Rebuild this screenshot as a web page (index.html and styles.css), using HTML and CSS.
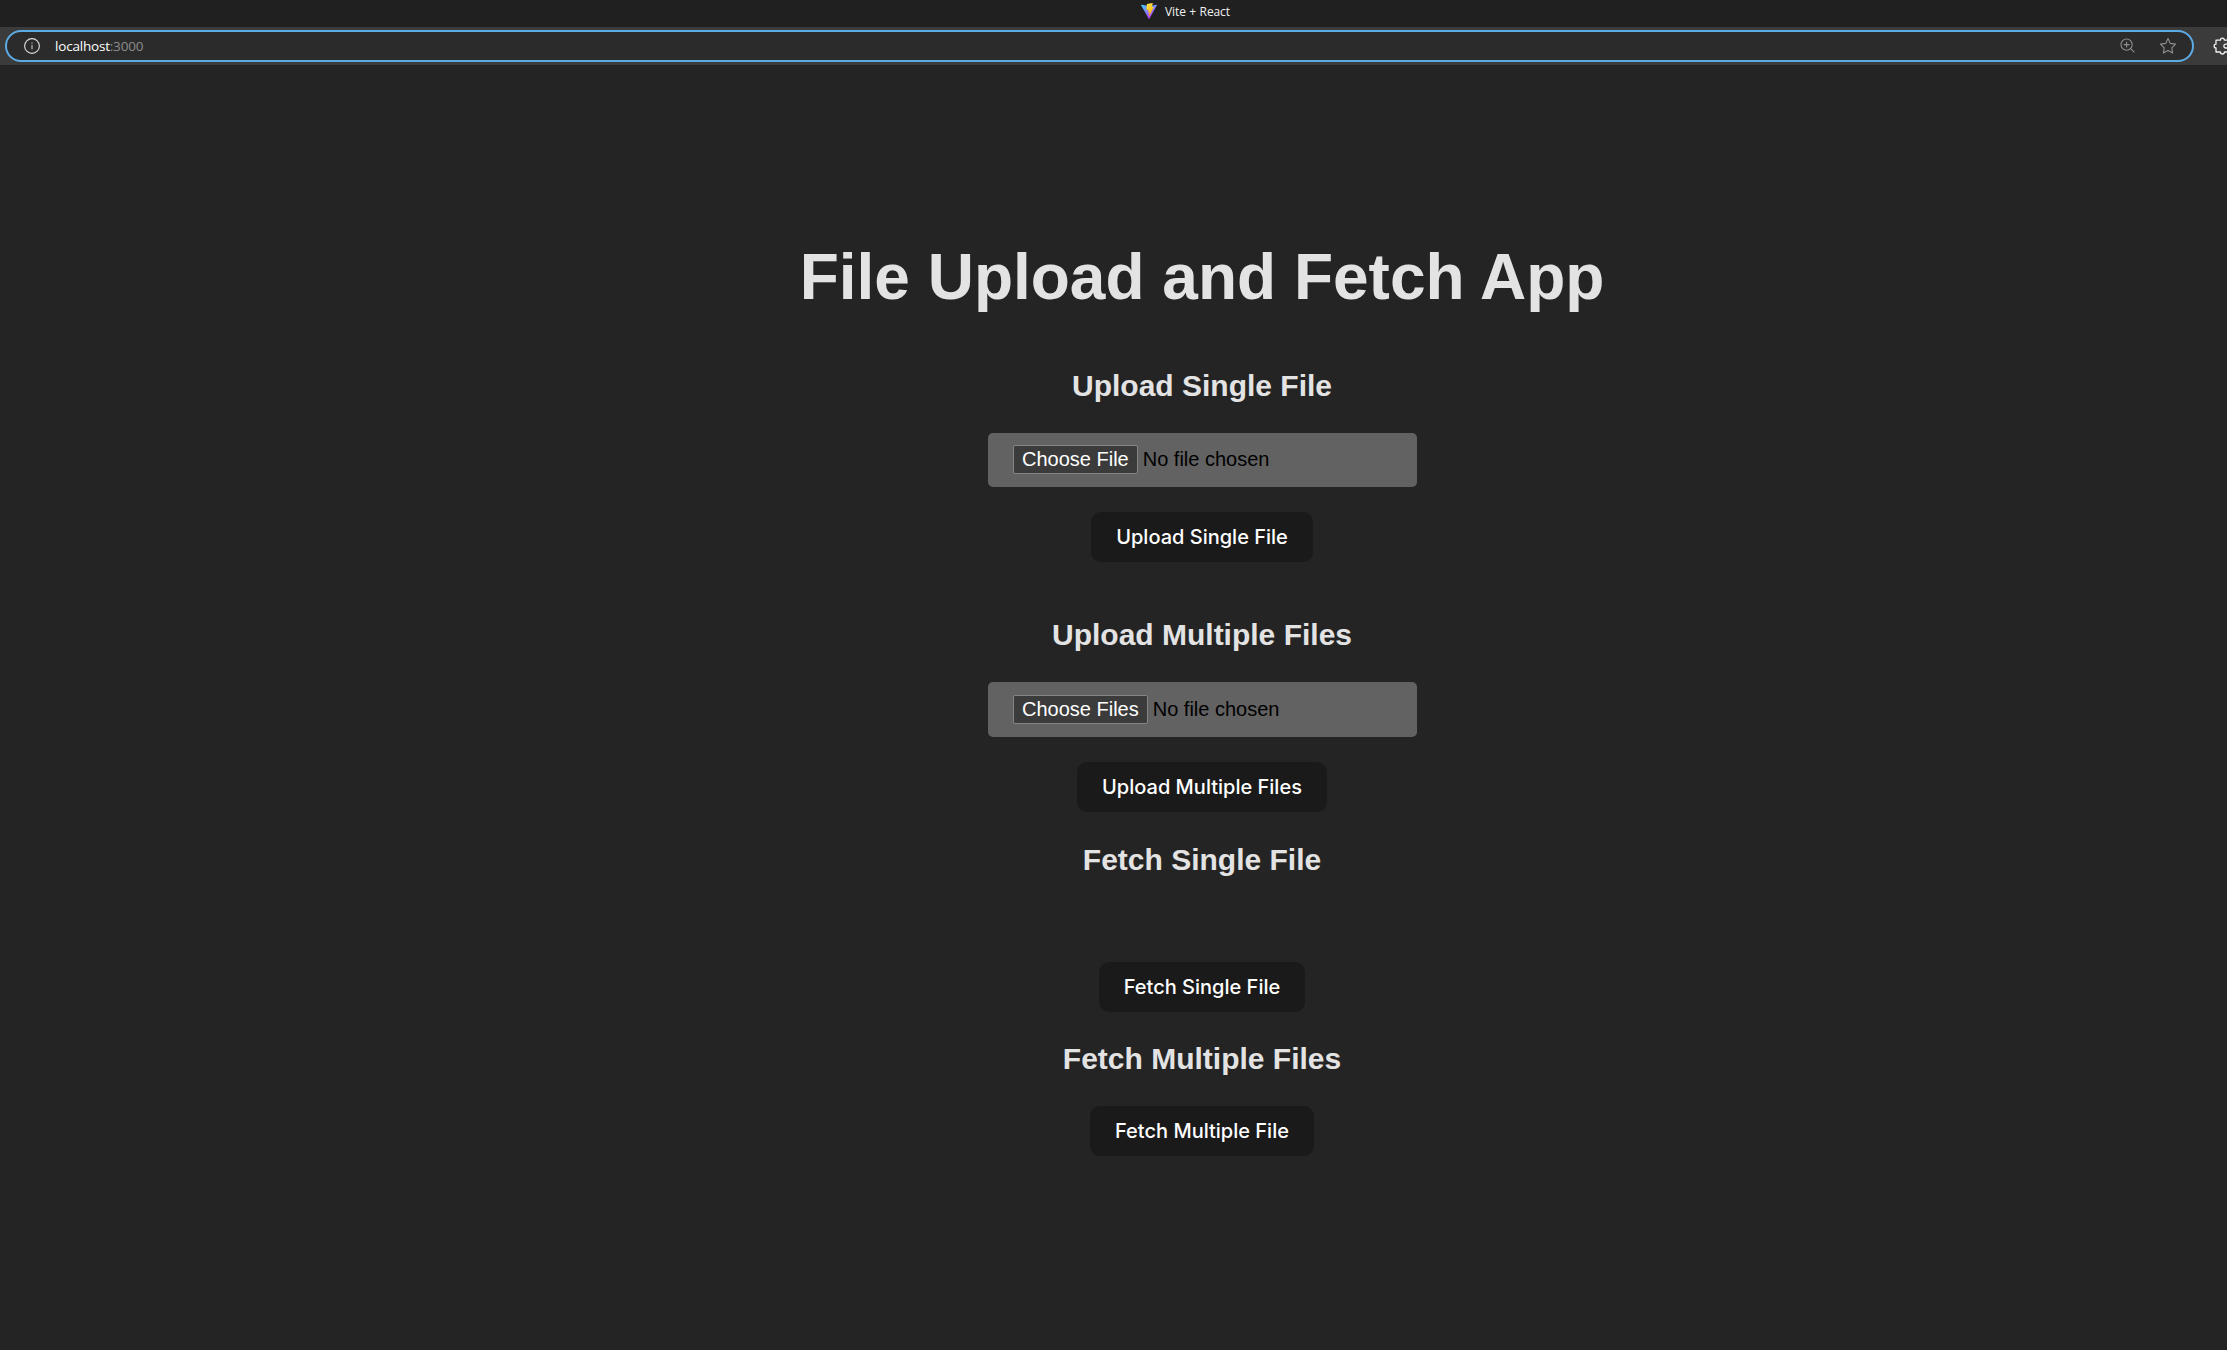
FILE: index.html
```html
<!DOCTYPE html>
<html lang="en">
<head>
<meta charset="utf-8">
<title>Vite + React</title>
<link rel="stylesheet" href="styles.css">
</head>
<body>
<header class="titlebar">
  <svg class="logo" width="16" height="16" viewBox="0 0 256 257">
    <defs>
      <linearGradient id="shield" x1="0" y1="0" x2=".6" y2="1"><stop offset="0" stop-color="#41d1ff"/><stop offset="1" stop-color="#bd34fe"/></linearGradient>
      <linearGradient id="bolt" x1=".4" y1="0" x2=".5" y2="1"><stop offset="0" stop-color="#ffea83"/><stop offset=".1" stop-color="#ffdd35"/><stop offset="1" stop-color="#ffa800"/></linearGradient>
    </defs>
    <path fill="url(#shield)" d="M255.153 37.938L134.897 252.976c-2.483 4.44-8.862 4.466-11.382.048L.875 37.958c-2.746-4.814 1.371-10.646 6.827-9.67l120.385 21.517a6.537 6.537 0 0 0 2.322-.004l117.867-21.483c5.438-.991 9.574 4.796 6.877 9.62Z"/>
    <path fill="url(#bolt)" d="M185.432.063L96.44 17.501a3.268 3.268 0 0 0-2.634 3.014l-5.474 92.456a3.268 3.268 0 0 0 3.997 3.378l24.777-5.718c2.318-.535 4.413 1.507 3.936 3.838l-7.361 36.047c-.495 2.426 1.782 4.5 4.151 3.78l15.304-4.649c2.372-.72 4.652 1.36 4.15 3.788l-11.698 56.621c-.732 3.542 3.979 5.473 5.943 2.437l1.313-2.028l72.516-144.72c1.215-2.423-.88-5.186-3.54-4.672l-25.505 4.922c-2.396.462-4.435-1.77-3.759-4.114l16.646-57.705c.677-2.35-1.37-4.583-3.769-4.113Z"/>
  </svg>
  <span>Vite + React</span>
</header>
<nav class="toolbar">
  <div class="address">
    <svg class="info" width="16" height="16" viewBox="0 0 16 16" fill="none" stroke="#dedede" stroke-width="1.1"><circle cx="8" cy="8" r="7.4"/><path d="M8 7v4.2M8 4.4v1.3" stroke="#a8a8a8" stroke-width="1.4"/></svg>
    <span class="url">localhost<span class="port">:3000</span></span>
    <svg class="magnifier" width="16" height="16" viewBox="0 0 16 16" fill="none" stroke="#8f8f8f" stroke-width="1.1"><circle cx="6.6" cy="6.6" r="5.6"/><path d="M10.2 10.2l4.2 4.2M6.6 3.7v5.8M3.7 6.6h5.8"/></svg>
    <svg class="star" width="18" height="18" viewBox="0 0 18 18" fill="none" stroke="#8f8f8f" stroke-width="1.1" stroke-linejoin="round"><path d="M9 1.6l2.3 4.8 5.3.7-3.8 3.7.9 5.3L9 13.6l-4.7 2.5.9-5.3-3.8-3.7 5.3-.7z"/></svg>
  </div>
  <svg class="puzzle" width="14" height="18" viewBox="0 0 14 18" fill="none" stroke="#f0f0f0" stroke-width="1.3" stroke-linejoin="round"><path d="M14 3.2h-2.6a2 2 0 0 0-4 0H3v4a1.9 1.9 0 0 0 0 3.8v4h4.4a2 2 0 0 0 4 0H14M14 7.2h-1.2a1.9 1.9 0 0 0 0 3.8H14"/></svg>
</nav>
<main class="app">
  <h1>File Upload and Fetch App</h1>
  <section class="upload">
    <h2>Upload Single File</h2>
    <div class="picker single"><span class="choose">Choose File</span><span>No file chosen</span></div>
    <button>Upload Single File</button>
  </section>
  <section class="upload">
    <h2>Upload Multiple Files</h2>
    <div class="picker"><span class="choose">Choose Files</span><span>No file chosen</span></div>
    <button>Upload Multiple Files</button>
  </section>
  <section class="fetch-single">
    <h2>Fetch Single File</h2>
    <button>Fetch Single File</button>
  </section>
  <section class="fetch-multiple">
    <h2>Fetch Multiple Files</h2>
    <button>Fetch Multiple File</button>
  </section>
</main>
</body>
</html>
```
FILE: styles.css
```css
* { box-sizing: border-box; }
html { overflow: hidden; }
body {
  margin: 0;
  height: 1350px;
  overflow: hidden;
  background: #242424;
  color: #e3e3e3;
  font-family: "Liberation Sans", Arial, sans-serif;
}
svg { display: block; flex: none; }

.titlebar {
  display: flex;
  height: 27px;
  padding: 3px 0 0 1141px;
  gap: 8px;
  background: #202020;
  color: #f2f2f2;
  font: 12px/18px "Open Sans", sans-serif;
  letter-spacing: -0.1px;
  word-spacing: 0.5px;
}
.toolbar {
  display: flex;
  align-items: center;
  height: 38px;
  padding-left: 5px;
  background: #3b3b3b;
}
.address {
  display: flex;
  align-items: center;
  flex: none;
  width: 2189px;
  height: 32px;
  padding: 0 15px 0 17px;
  border: 2px solid #5dabe4;
  border-radius: 16px;
  background: #2b2b2b;
}
.url {
  flex: 1;
  margin-left: 15px;
  color: #fff;
  font: 13.5px/18px "Open Sans", sans-serif;
  letter-spacing: -0.2px;
}
.port { color: #8c8c8c; }
.magnifier { margin-right: 23px; }
.puzzle { margin-left: 19px; }

.app {
  display: flex;
  flex-direction: column;
  align-items: center;
  padding: 177px 0 0 177px;
}
section {
  display: flex;
  flex-direction: column;
  align-items: center;
}
h1 {
  margin: 0 0 51px;
  font-size: 64px;
  line-height: 70px;
}
h2 {
  margin: 0 0 25px;
  font-size: 30px;
  line-height: 45px;
}
.upload { margin-bottom: 50px; }
.upload + .upload { margin-bottom: 25px; }
.fetch-single { margin-bottom: 24px; }
.fetch-single h2 { margin-bottom: 80px; }

.picker {
  display: flex;
  align-items: center;
  width: 429px;
  height: 55px;
  margin-bottom: 25px;
  padding-left: 25px;
  gap: 5px;
  border-radius: 5px;
  background: #626262;
  color: #000;
  font-size: 20px;
  line-height: 23px;
}
.picker.single { height: 54px; padding-bottom: 1px; }
.choose {
  padding: 2px 8px 2px 8.5px;
  border: 1px solid #858585;
  border-radius: 2px;
  background: #3b3b3b;
  color: #fff;
}
button {
  height: 50px;
  padding: 0 24.7px;
  border: 0;
  border-radius: 10px;
  background: #1a1a1a;
  color: #fff;
  font: 500 20px/24px Inter, sans-serif;
}
```
